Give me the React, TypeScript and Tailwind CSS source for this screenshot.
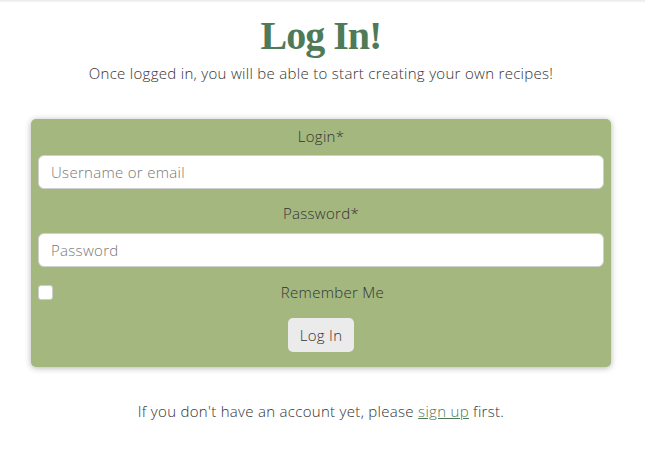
import { useState } from "react";

const body = "font-['Open_Sans','Liberation_Sans',sans-serif] font-light tracking-[0.3px]";

const App = () => {
  const [remember, setRemember] = useState(false);

  return (
    <div className={`min-h-screen bg-white text-[#333] ${body}`}>
      {/* Navbar shadow edge */}
      <div className="h-[3px] bg-gradient-to-b from-[#e9e9e9] to-white" />

      <div className="flex flex-col items-center pr-[3px]">
        <h1 className="mt-[9px] text-[40px] leading-[48px] font-bold tracking-[-1px] text-[#4e7a58] font-['Liberation_Serif','DejaVu_Serif',serif]">
          Log In!
        </h1>
        <p className="mt-[1px] text-[15px] leading-6">
          Once logged in, you will be able to start creating your own recipes!
        </p>

        {/* Card */}
        <form
          className="mt-[34px] w-[580px] rounded-[5px] bg-[#a3b77f] px-[7px] pt-[3px] pb-[15px] shadow-[0_1px_6px_rgba(0,0,0,0.3)]"
          onSubmit={(e) => e.preventDefault()}
        >
          <label className="block text-center text-[15px] leading-6 py-[2px]">Login*</label>
          <input
            className="mt-[5px] block h-[34px] w-full rounded-[6px] border border-[#d0d0d0] bg-white px-3 text-[15px] placeholder:text-[#777] outline-none"
            placeholder="Username or email"
          />
          <label className="mt-[10px] block text-center text-[15px] leading-6 py-[2px]">Password*</label>
          <input
            type="password"
            className="mt-[6px] block h-[34px] w-full rounded-[6px] border border-[#d0d0d0] bg-white px-3 text-[15px] placeholder:text-[#777] outline-none"
            placeholder="Password"
          />
          <div className="mt-[13px] flex items-center">
            <input
              type="checkbox"
              checked={remember}
              onChange={(e) => setRemember(e.target.checked)}
              className="h-[15px] w-[15px] appearance-none rounded-[3px] border border-[#ccc] bg-white"
            />
            <span className="flex-1 pl-2 text-center text-[15px] leading-6">Remember Me</span>
          </div>
          <div className="mt-[14px] flex justify-center">
            <button className="h-[34px] rounded-[5px] bg-[#ebebeb] px-3 text-[15px] text-[#333]">Log In</button>
          </div>
        </form>

        <p className="mt-[32px] text-[15px] leading-6">
          If you don't have an account yet, please{" "}
          <a href="#" className="text-[#4e7a58] underline">sign up</a> first.
        </p>
      </div>
    </div>
  );
};

export default App;
